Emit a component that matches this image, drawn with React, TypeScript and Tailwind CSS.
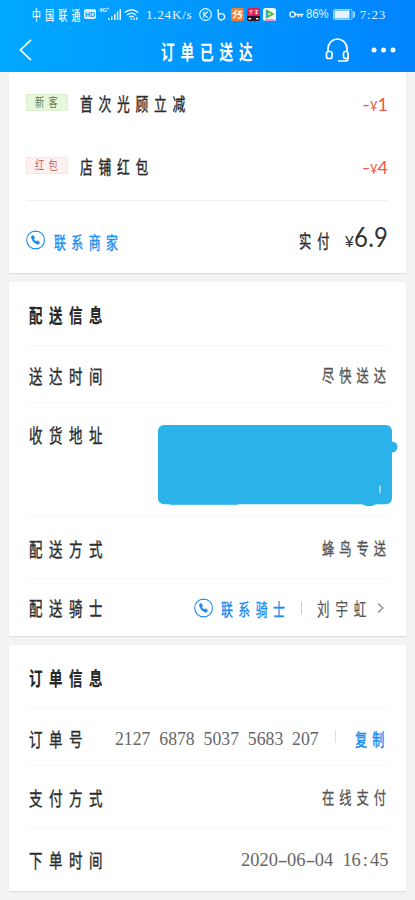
import React from "react";

const CJK = "font-['Noto_Sans_CJK_SC',sans-serif]";

type NarrowProps = { box: string; text: string; children: React.ReactNode };

/** Condensed text: the outer box reserves the final width, the inner span is squeezed to it. */
function Narrow({ box, text, children }: NarrowProps) {
  return (
    <span className={`block shrink-0 ${box}`}>
      <span className={`block w-max origin-left whitespace-nowrap leading-none ${text}`}>{children}</span>
    </span>
  );
}

function Label({ children }: { children: string }) {
  return (
    <Narrow box="w-[80px]" text={`${CJK} scale-x-[0.69] text-[19.5px] tracking-[9.5px] text-[#2c2c2c] [-webkit-text-stroke:0.4px_#2c2c2c]`}>
      {children}
    </Narrow>
  );
}

function Heading({ children }: { children: string }) {
  return (
    <Narrow box="w-[80px]" text={`${CJK} scale-x-[0.69] text-[19.5px] font-bold tracking-[9.5px] text-[#262626] [-webkit-text-stroke:0.2px_#262626]`}>
      {children}
    </Narrow>
  );
}

function Value({ children }: { children: string }) {
  return (
    <span className="pb-[2px]">
      <Narrow box="w-[66px]" text={`${CJK} scale-x-[0.7] text-[17.5px] tracking-[7.2px] text-[#555] [-webkit-text-stroke:0.3px_#555]`}>
        {children}
      </Narrow>
    </span>
  );
}

function Link({ children, box }: { children: string; box: string }) {
  return (
    <Narrow box={box} text={`${CJK} scale-x-[0.7] text-[17px] tracking-[7.8px] text-[#1e8df0] [-webkit-text-stroke:0.4px_#1e8df0]`}>
      {children}
    </Narrow>
  );
}

function Phone() {
  return (
    <svg className="h-5 w-5 shrink-0" viewBox="0 0 20 20" fill="none">
      <circle cx="9.600" cy="10" r="8.900" stroke="#1e8df0" strokeWidth="1.100" />
      <path d="M5.400 6.200 6.600 5.200q.7-.3 1.100.3l1.100 1.700q.3.700-.3 1.200l-.7.600q.8 1.500 2.300 2.300l.7-.5q.6-.4 1.100 0l1.700 1.200q.6.500.2 1.100l-1 1.100q-.7.600-1.800.2C8.200 13.300 6 11.100 5.100 7.800q-.2-1 .3-1.600Z" fill="#1e8df0" />
    </svg>
  );
}

function Row({ size, children, last = false }: { size: string; children: React.ReactNode; last?: boolean }) {
  return (
    <div className={`ml-[19px] mr-[18px] flex ${last ? "" : "border-b border-[#f6f6f6]"} ${size}`}>{children}</div>
  );
}

function Card({ children, size }: { children: React.ReactNode; size: string }) {
  return <section className={`mx-[9px] bg-white shadow-[0_1px_1px_#dedede] ${size}`}>{children}</section>;
}

function Tag({ children, tone }: { children: string; tone: string }) {
  return (
    <span className={`mb-[2px] flex h-[17px] w-[42px] shrink-0 items-center justify-center border ${tone}`}>
      <Narrow box="w-[24px]" text={`${CJK} scale-x-[0.74] text-[12.5px] tracking-[5.8px]`}>{children}</Narrow>
    </span>
  );
}

function Discount({ tag, tone, name, amount }: { tag: string; tone: string; name: string; amount: string }) {
  return (
    <div className="flex h-[63px] items-center">
      <Tag tone={tone}>{tag}</Tag>
      <span className="w-[12px]" />
      <Narrow box="w-[112px]" text={`${CJK} scale-x-[0.69] text-[18.5px] tracking-[8.3px] text-[#2c2c2c] [-webkit-text-stroke:0.4px_#2c2c2c]`}>
        {name}
      </Narrow>
      <span className="ml-auto flex items-baseline pt-[1px] font-['Lato',sans-serif] leading-none text-[#ee5a44]">
        <span className="inline-block w-[8px] origin-left scale-x-[1.3] text-[17px]">-</span>
        <span className="text-[13px]">¥</span>
        <span className="text-[18px]">{amount}</span>
      </span>
    </div>
  );
}

function StatusBar() {
  return (
    <div className="flex h-[28px] items-center pl-[32px] pr-[29px] pt-px text-white/90">
      <Narrow box="w-[52px]" text={`${CJK} scale-x-[0.65] text-[13.5px] tracking-[6.8px] [-webkit-text-stroke:0.2px_white]`}>中国联通</Narrow>
      <span className="mb-px flex h-[10px] w-[12px] items-center justify-center rounded-[2px] bg-white/85 font-['Liberation_Sans',sans-serif] text-[7px] font-bold leading-none text-[#079dff]">HD</span>
      <span className="mb-[9px] ml-[3px] w-[9px] font-['Liberation_Sans',sans-serif] text-[6px] font-bold leading-none">4G⁺</span>
      <svg className="h-[13px] w-[13px]" viewBox="0 0 13 13" fill="currentColor">
        <path d="M0 10h1.500v2H0zM3 8.500h1.500V12H3zM6 6h1.500v6H6zM8.800 3.500h1.500V12H8.800zM11.500 1H13v11h-1.500z" />
      </svg>
      <svg className="ml-[3px] h-[13px] w-[15px]" viewBox="0 0 15 13" fill="none" stroke="currentColor" strokeWidth="1.300">
        <path d="M.8 4.500Q7.500-1 14.200 4.500M3 7Q7.500 3.200 12 7M5.200 9.300Q7.500 7.300 9.800 9.300" />
        <path d="M7.500 10.200v1.800M10.300 10v2M12.800 9v3" />
      </svg>
      <span className="ml-[7px] w-[48px] shrink-0">
        <span className="block w-max origin-left scale-x-[0.98] whitespace-nowrap font-['Liberation_Serif',serif] text-[13.5px] leading-none tracking-[0.7px]">1.24K/s</span>
      </span>
      <svg className="ml-[5px] h-[13px] w-[13px] shrink-0" viewBox="0 0 13 13" fill="none" stroke="currentColor" strokeWidth="1.200">
        <circle cx="6.500" cy="6.500" r="5.800" />
        <path d="M4.800 3.500v6M8.800 3.500 5.200 6.700l3.600 2.900" />
      </svg>
      <svg className="ml-[5px] h-[12px] w-[9px] shrink-0" viewBox="0 0 9 12" fill="none" stroke="currentColor" strokeWidth="1.400">
        <path d="M0 1.200h1.300v6.500a3.200 3.200 0 1 0 3.200-3.100q-1.500 0-2.500 1" />
      </svg>
      <svg className="ml-[5px] h-[13px] w-[13px] shrink-0" viewBox="0 0 13 13">
        <rect width="13" height="13" rx="2" fill="#f47b32" />
        <path d="M5.500 2 2.500 5.500H5Q4.500 9 2 10.500M6.500 3.500H10L7 6.500h3.500q0 3.500-2 3.500H6.500" fill="none" stroke="#fff" strokeWidth="1.400" />
      </svg>
      <svg className="ml-[3px] h-[13px] w-[13px] shrink-0" viewBox="0 0 13 13">
        <rect width="13" height="13" rx="2" fill="#e61d50" />
        <path d="M0 8h13v3q0 2-2 2H2q-2 0-2-2z" fill="#291326" />
        <path d="M2 3h4M4 1.500v5M7.500 2.500h4M7.500 5h4M9.500 2v4.500" stroke="#ffd2dc" strokeWidth=".9" />
        <path d="M1.500 10h2.500v1.500H1.500zM9 10h2.500v1.500H9z" fill="#fff" />
      </svg>
      <svg className="ml-[3px] h-[13px] w-[13px] shrink-0" viewBox="0 0 13 13">
        <rect width="13" height="13" rx="2.500" fill="#f6f8f8" />
        <path d="M3.300 1.800 10.800 6 3.300 10.200z" fill="#4fbd35" stroke="#4fbd35" strokeLinejoin="round" />
        <path d="M3 2.500v7l2-1.300V4z" fill="#2aa5ee" />
        <path d="m5.500 4.500 2.500 1.500-2.500 1.500z" fill="#fff" />
        <path d="M2 12h9" stroke="#ed75c4" strokeWidth="1.500" />
      </svg>
      <svg className="ml-[13px] h-[9px] w-[15px] shrink-0" viewBox="0 0 15 9" fill="none" stroke="currentColor" strokeWidth="1.400">
        <circle cx="3.500" cy="4.500" r="2.600" />
        <path d="M6 4.500h8.500M9.500 4.500V7M12.500 4.500V7" />
      </svg>
      <span className="ml-[2px] w-[23px] shrink-0">
        <span className="block w-max origin-left scale-x-[0.9] whitespace-nowrap font-['Liberation_Sans',sans-serif] text-[12.500px] leading-none">86%</span>
      </span>
      <svg className="ml-[4px] h-[11px] w-[22px] shrink-0" viewBox="0 0 22 11" fill="none" stroke="currentColor">
        <rect x=".5" y=".5" width="18.500" height="10" rx="1.500" strokeOpacity=".7" />
        <path d="M20.500 2.500q1.500 3 0 6" strokeWidth="1.300" />
        <rect x="1.500" y="1.500" width="15" height="8" fill="currentColor" stroke="none" />
      </svg>
      <span className="ml-auto w-max whitespace-nowrap font-['Liberation_Serif',serif] text-[13px] leading-none tracking-[0.8px]">7:23</span>
    </div>
  );
}

function NavBar() {
  return (
    <div className="flex h-[44px] items-center pl-[19px] pr-[19px]">
      <svg className="h-[22px] w-[13px]" viewBox="0 0 13 22" fill="none" stroke="white" strokeWidth="1.700">
        <path d="M12 .8 1.500 11 12 21.200" />
      </svg>
      <span className="w-[129px]" />
      <span className="pt-[3px]">
        <Narrow box="w-[97px]" text={`${CJK} scale-x-[0.68] text-[20px] font-bold tracking-[8.700px] text-white`}>订单已送达</Narrow>
      </span>
      <svg className="ml-auto h-[25px] w-[25px]" viewBox="0 0 25 25" fill="none" stroke="white" strokeWidth="1.700">
        <path d="M3 14V10.500a9.500 9.500 0 0 1 19 0V14M23 15v5.500q0 2.500-2.500 2.500H13" />
        <rect x="1.500" y="13.500" width="5.500" height="7" rx="2" />
        <path d="M23 21V15.500q0-2-2-2h-.5q-2 0-2 2v3q0 2 2 2H23" />
      </svg>
      <svg className="ml-[21px] h-[6px] w-[25px]" viewBox="0 0 25 6" fill="white">
        <circle cx="3" cy="3" r="2.500" />
        <circle cx="12.500" cy="3" r="2.500" />
        <circle cx="22" cy="3" r="2.500" />
      </svg>
    </div>
  );
}

function Wide({ children }: { children: string }) {
  return <span className="inline-block w-[0.5em] origin-left scale-x-[1.6] text-left">{children}</span>;
}

export default function App() {
  return (
    <main className="h-[900px] w-[415px] overflow-hidden bg-[#f3f3f3]">
      <header className="h-[72px] bg-linear-to-r from-[#00a8ff] to-[#0084ff]">
        <StatusBar />
        <NavBar />
      </header>

      <Card size="h-[201px]">
        <div className="mx-[17px] mr-[18px] h-[129px] border-b border-[#f0f0f0]">
          <Discount tag="新客" tone="border-[#dcefcf] bg-[#e7f7dc] text-[#5d7a50]" name="首次光顾立减" amount="1" />
          <Discount tag="红包" tone="border-[#fbe4e1] bg-[#fff1ef] text-[#c96660]" name="店铺红包" amount="4" />
        </div>
        <div className="mx-[17px] mr-[18px] flex h-[72px] items-center pt-[6px]">
          <Phone />
          <span className="w-[8px]" />
          <span className="pt-[2px]">
            <Link box="w-[70px]">联系商家</Link>
          </span>
          <span className="ml-auto" />
          <Narrow box="w-[46px]" text={`${CJK} scale-x-[0.68] text-[18px] tracking-[9px] text-[#2c2c2c] [-webkit-text-stroke:0.4px_#2c2c2c]`}>实付</Narrow>
          <span className="flex items-baseline pb-[7px] font-['Lato',sans-serif] leading-none text-[#333]">
            <span className="text-[16px]">¥</span>
            <span className="w-[34px]">
              <span className="block w-max origin-left scale-x-[0.92] text-[26px] tracking-[0.3px]">6.9</span>
            </span>
          </span>
        </div>
      </Card>

      <div className="h-[9px]" />

      <Card size="h-[354px]">
        <Row size="h-[64px] items-center pt-[3px] pl-[1px]">
          <Heading>配送信息</Heading>
        </Row>
        <Row size="h-[57px] items-center justify-between pt-[3px] pl-[1px]">
          <Label>送达时间</Label>
          <Value>尽快送达</Value>
        </Row>
        <Row size="h-[114px] items-start justify-between pl-[1px]">
          <div className="pt-[22px]">
            <Label>收货地址</Label>
          </div>
          <svg className="-mr-[10px] mt-[22px] h-[82px] w-[240px] shrink-0" viewBox="0 0 240 82" fill="#2ab2e9">
            <rect x="0" y="0" width="234" height="79.300" rx="6" />
            <circle cx="234" cy="22" r="5.500" />
            <path d="M12 79h68v.8H12zM204 79h14q-7 4.500-14 0z" />
            <path d="M221.500 61q1-1.500 1.300 0v5q-.3 3-1.300 2z" fill="#cceffa" />
            <circle cx="36.500" cy="24.500" r=".8" fill="#64c9ef" />
          </svg>
        </Row>
        <Row size="h-[62px] items-center justify-between pl-[1px] pt-[2px]">
          <Label>配送方式</Label>
          <Value>蜂鸟专送</Value>
        </Row>
        <Row size="h-[57px] items-center pl-[1px] pt-[1px]" last>
          <Label>配送骑士</Label>
          <span className="ml-auto" />
          <Phone />
          <span className="w-[7px]" />
          <Link box="w-[70px]">联系骑士</Link>
          <span className="ml-[10px] h-[12px] w-px bg-[#ccc]" />
          <span className="w-[15px]" />
          <Narrow box="w-[60px]" text={`${CJK} scale-x-[0.69] text-[18px] tracking-[8.700px] text-[#555] [-webkit-text-stroke:0.2px_#555]`}>刘宇虹</Narrow>
          <svg className="mr-[4px] h-[10px] w-[7px]" viewBox="0 0 7 10" fill="none" stroke="#888" strokeWidth="1.200">
            <path d="m1 .5 5 4.500-5 4.500" />
          </svg>
        </Row>
      </Card>

      <div className="h-[9px]" />

      <Card size="h-[246px]">
        <Row size="h-[63px] items-center pt-[4px] pl-[1px]">
          <Heading>订单信息</Heading>
        </Row>
        <Row size="h-[58px] items-center pt-[4px] pl-[1px]">
          <Label>订单号</Label>
          <span className="ml-auto w-[204px]">
            <span className="block w-max origin-left scale-x-[0.984] whitespace-nowrap font-['Liberation_Serif',serif] text-[18px] leading-none text-[#666] [word-spacing:4.500px]">
              2127 6878 5037 5683 207
            </span>
          </span>
          <span className="mb-[4px] ml-[16px] mr-[19px] h-[12px] w-px bg-[#ddd]" />
          <Narrow box="w-[33px]" text={`${CJK} scale-x-[0.69] text-[17.500px] tracking-[7.600px] text-[#1e8df0] [-webkit-text-stroke:0.500px_#1e8df0]`}>复制</Narrow>
        </Row>
        <Row size="h-[62px] items-center justify-between pt-[2px] pl-[1px]">
          <Label>支付方式</Label>
          <Value>在线支付</Value>
        </Row>
        <Row size="h-[63px] items-center justify-between pt-[1px] pl-[1px]" last>
          <Label>下单时间</Label>
          <span className="w-[147px]">
            <span className="block w-max origin-left scale-x-[1.024] whitespace-nowrap font-['Liberation_Serif',serif] text-[18px] leading-none text-[#666] [word-spacing:4.500px]">
              2020<Wide>-</Wide>06<Wide>-</Wide>04 16<span className="inline-block w-[0.5em] text-center">:</span>45
            </span>
          </span>
        </Row>
      </Card>
    </main>
  );
}
